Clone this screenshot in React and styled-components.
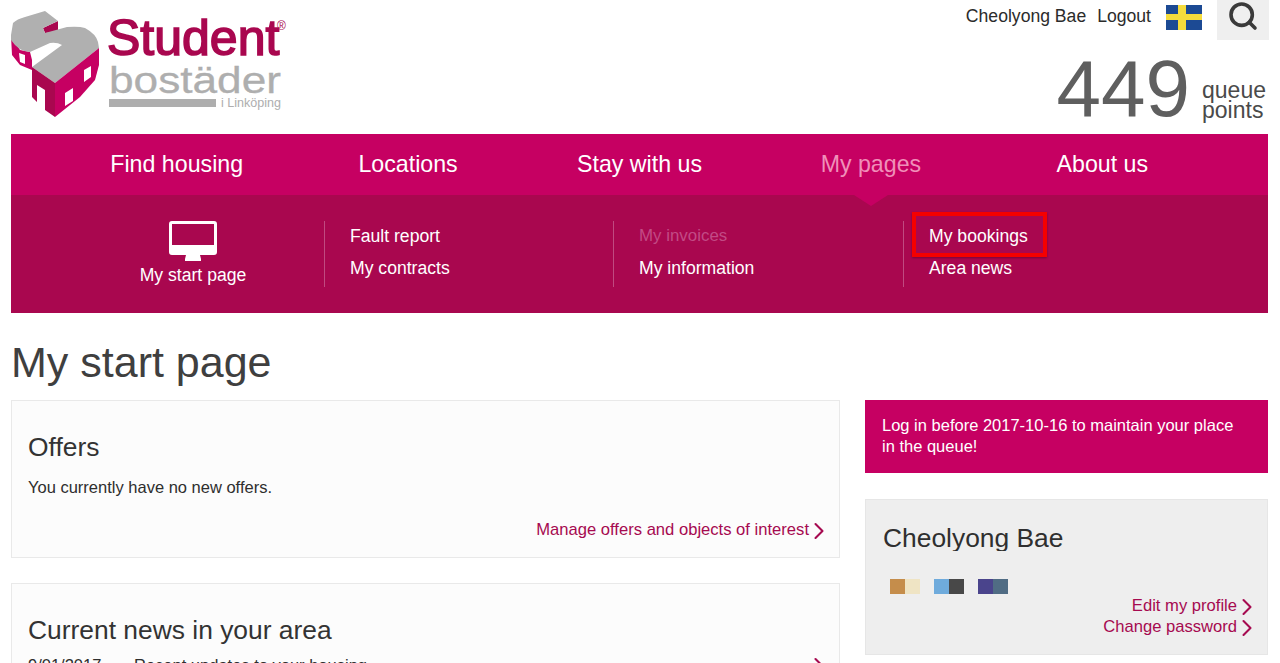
import React from "react";
import styled, { createGlobalStyle } from "styled-components";
import { ChevronRight, Search } from "lucide-react";

const Global = createGlobalStyle`
  html, body { margin: 0; padding: 0; background: #fff; height: 663px; overflow: hidden; }
  body { font-family: "Liberation Sans", Arial, sans-serif; color: #2e2e2e; }
  * { box-sizing: border-box; }
`;

const Page = styled.div`
  width: 1280px;
  height: 663px;
  overflow: hidden;
  padding: 0 12px 0 11px;
`;

const Header = styled.header`
  height: 134px;
  display: flex;
  justify-content: space-between;
`;

const Logo = styled.svg`
  width: 280px;
  height: 120px;
  display: block;
`;

const HeaderRight = styled.div`
  display: flex;
  flex-direction: column;
  align-items: flex-end;
`;

const UserBar = styled.div`
  display: flex;
  align-items: flex-start;
  height: 40px;
  margin-right: -1px;
`;

const UserLink = styled.span`
  font-size: 17.6px;
  line-height: 32px;
  color: #2b2b2b;
  margin-right: ${(p) => p.$gap}px;
`;

const Flag = styled.svg`
  width: 36px;
  height: 25px;
  margin: 5px 15px 0 0;
  display: block;
`;

const SearchBox = styled.div`
  width: 52px;
  height: 40px;
  background: #efefef;
  display: flex;
  align-items: flex-start;
  justify-content: center;
  color: #3a3a3a;
`;

const Points = styled.div`
  display: flex;
  align-items: flex-end;
  margin-top: 7px;
  margin-right: 2px;
`;

const PointsValue = styled.span`
  font-size: 80px;
  line-height: 84px;
  color: #5f5f5f;
`;

const PointsLabel = styled.span`
  font-size: 23px;
  line-height: 20px;
  color: #4a4a4a;
  margin-left: 12px;
  padding-bottom: 11px;
`;

const MainNav = styled.nav`
  height: 61px;
  background: #c60062;
  display: grid;
  grid-template-columns: repeat(5, 1fr);
  padding: 0 50px;
`;

const NavItem = styled.a`
  position: relative;
  font-size: 23.2px;
  line-height: 60px;
  text-align: center;
  color: ${(p) => (p.$active ? "#f08fb9" : "#fff")};
  ${(p) =>
    p.$active &&
    `&::after {
      content: "";
      position: absolute;
      left: 50%;
      bottom: -11px;
      margin-left: -17px;
      border-left: 17px solid transparent;
      border-right: 17px solid transparent;
      border-top: 11px solid #c60062;
    }`}
`;

const SubNav = styled.div`
  height: 118px;
  background: #a9074f;
  display: grid;
  grid-template-columns: 262px 289px 290px 1fr;
  padding: 26px 0 0 51px;
`;

const StartCol = styled.div`
  display: flex;
  flex-direction: column;
  align-items: center;
  color: #fff;
  font-size: 17.6px;
`;

const StartLabel = styled.span`
  margin-top: 4px;
  line-height: 20px;
`;

const Screen = styled.svg`
  width: 48px;
  height: 40px;
  display: block;
`;

const SubCol = styled.div`
  height: 66px;
  padding: 5px 0 0 25px;
  border-left: 1px solid #c04a80;
  display: flex;
  flex-direction: column;
  gap: 12px;
`;

const SubLink = styled.a`
  position: relative;
  font-size: ${(p) => (p.$muted ? 16.9 : 17.6)}px;
  line-height: 20px;
  height: 20px;
  white-space: nowrap;
  color: ${(p) => (p.$muted ? "#c24a85" : "#fff")};
`;

const Highlight = styled.span`
  position: absolute;
  left: -17px;
  top: -14px;
  width: 135px;
  height: 45px;
  border: 4px solid #f50000;
  box-shadow: 0 1px 2px rgba(60, 0, 30, 0.45);
`;

const PageTitle = styled.h1`
  margin: 25px 0 13px;
  font-size: 43px;
  line-height: 49px;
  font-weight: 400;
  color: #3f3f3f;
`;

const Columns = styled.div`
  display: grid;
  grid-template-columns: 829px 403px;
  column-gap: 25px;
  align-items: start;
`;

const Stack = styled.div`
  display: flex;
  flex-direction: column;
  gap: ${(p) => p.$gap}px;
`;

const Card = styled.section`
  background: #fcfcfc;
  border: 1px solid #e9e9e9;
  height: ${(p) => p.$h}px;
  padding: 30px 16px 0;
`;

const CardTitle = styled.h2`
  margin: 0;
  font-size: 26.4px;
  line-height: 32px;
  font-weight: 400;
  color: #333;
`;

const CardText = styled.p`
  margin: 12px 0 0;
  font-size: 16.5px;
  line-height: 24px;
  color: #2e2e2e;
`;

const LinkRow = styled.div`
  display: flex;
  justify-content: flex-end;
  margin-top: 20px;
`;

const MoreLink = styled.a`
  display: inline-flex;
  align-items: center;
  font-size: 16.6px;
  line-height: 21px;
  height: 21px;
  color: #a60a50;
`;

const Chevron = styled(ChevronRight)`
  width: 28px;
  height: 28px;
  margin: 2px -10px 0 -4px;
  flex: none;
`;

const NewsRow = styled.div`
  display: flex;
  justify-content: space-between;
  align-items: center;
  height: 22px;
  margin-top: 8px;
  font-size: 16.5px;
  line-height: 22px;
  color: #2e2e2e;
`;

const NewsDate = styled.span`
  width: 106px;
  display: inline-block;
`;

const Banner = styled.div`
  height: 73px;
  background: #c60062;
  color: #fff;
  font-size: 16.5px;
  line-height: 20.5px;
  padding: 15px 17px 0;
`;

const ProfileCard = styled.section`
  height: 156px;
  background: #eeeeee;
  border: 1px solid #e6e6e6;
  padding: 23px 17px 0;
`;

const ProfileName = styled.h2`
  margin: 0;
  height: 28px;
  overflow: hidden;
  font-size: 26.4px;
  line-height: 30px;
  font-weight: 400;
  color: #2f2f2f;
`;

const Swatches = styled.div`
  display: flex;
  gap: 14px;
  margin: 28px 0 0 7px;
  height: 15px;
`;

const Swatch = styled.div`
  display: flex;
  width: 30px;
  height: 15px;
`;

const Tone = styled.span`
  flex: 1;
  background: ${(p) => p.$c};
`;

const ProfileLinks = styled.div`
  margin-top: 1px;
  display: flex;
  flex-direction: column;
  align-items: flex-end;
  margin-right: -1px;
`;

const Monitor = () => (
  <Screen viewBox="0 0 48 40">
    <path
      fill="#fff"
      fillRule="evenodd"
      d="M3 0h42a3 3 0 0 1 3 3v28a3 3 0 0 1-3 3H31l1 4v2H16v-2l1-4H3a3 3 0 0 1-3-3V3a3 3 0 0 1 3-3zM3 3v21h42V3z"
    />
  </Screen>
);

const LogoMark = () => (
  <Logo viewBox="0 0 280 120">
    <path fill="#c60062" d="M0 36 L1 55 L9 65 L21 70 L21 60 L19 52 L9 50z" />
    <path fill="#fff" d="M8 53 L14 55 V64 L9 62z" />
    <path fill="#a9074f" d="M32 28 L47 21 L47 32 L34 33z" />
    <path
      fill="#b0b0b0"
      d="M0 35 L2 23 Q6 19 14 17 L34 11 L47 21 L32 28 L34 33 L56 27 Q68 26 74 28 Q85 34 87 42 L88 48 L44 83 L21 67 L51 45 Q46 42 39 43 L19 52 Q8 52 0 40z"
    />
    <path fill="#a9074f" d="M21 67 L44 83 V117 L34 110 V90 L26 85 V102 L21 97z" />
    <path fill="#c60062" d="M44 83 L88 48 V65 L84 80 L69 97 L44 117z" />
    <path fill="#fff" d="M73 70 L80 66 V77 L73 82z M54 93 L62 88 V101 L54 106z" />
    <text x="96" y="55" fontFamily="'Liberation Sans', sans-serif" fontSize="50" fill="#a9074f" stroke="#a9074f" strokeWidth="1.6">Student</text>
    <text x="266" y="30" fontFamily="'Liberation Sans', sans-serif" fontSize="12" fill="#a9074f">®</text>
    <text x="98" y="93" fontFamily="'Liberation Sans', sans-serif" fontSize="36" fill="#aeaeae" stroke="#aeaeae" strokeWidth="0.3" textLength="172" lengthAdjust="spacingAndGlyphs">bostäder</text>
    <rect x="98" y="99" width="107" height="8" fill="#aeaeae" />
    <text x="210" y="107" fontFamily="'Liberation Sans', sans-serif" fontSize="12" fill="#aeaeae" textLength="60" lengthAdjust="spacingAndGlyphs">i Linköping</text>
  </Logo>
);

const SwedishFlag = () => (
  <Flag viewBox="0 0 36 25">
    <rect width="36" height="25" fill="#1c4a94" />
    <rect x="12" width="8" height="25" fill="#f5dc3c" />
    <rect y="9" width="36" height="6" fill="#f5dc3c" />
  </Flag>
);

const navItems = ["Find housing", "Locations", "Stay with us", "My pages", "About us"];
const swatches = [
  ["#c58d4b", "#efe4c4"],
  ["#6fabdc", "#484848"],
  ["#4a448c", "#506c84"],
];

export default function App() {
  return (
    <Page>
      <Global />
      <Header>
        <LogoMark />
        <HeaderRight>
          <UserBar>
            <UserLink $gap={11}>Cheolyong Bae</UserLink>
            <UserLink $gap={15}>Logout</UserLink>
            <SwedishFlag />
            <SearchBox>
              <Search size={32} strokeWidth={2.7} />
            </SearchBox>
          </UserBar>
          <Points>
            <PointsValue>449</PointsValue>
            <PointsLabel>
              queue
              <br />
              points
            </PointsLabel>
          </Points>
        </HeaderRight>
      </Header>
      <MainNav>
        {navItems.map((n) => (
          <NavItem key={n} $active={n === "My pages"}>
            {n}
          </NavItem>
        ))}
      </MainNav>
      <SubNav>
        <StartCol>
          <Monitor />
          <StartLabel>My start page</StartLabel>
        </StartCol>
        <SubCol>
          <SubLink>Fault report</SubLink>
          <SubLink>My contracts</SubLink>
        </SubCol>
        <SubCol>
          <SubLink $muted>My invoices</SubLink>
          <SubLink>My information</SubLink>
        </SubCol>
        <SubCol>
          <SubLink>
            My bookings
            <Highlight />
          </SubLink>
          <SubLink>Area news</SubLink>
        </SubCol>
      </SubNav>
      <PageTitle>My start page</PageTitle>
      <Columns>
        <Stack $gap={25}>
          <Card $h={158}>
            <CardTitle>Offers</CardTitle>
            <CardText>You currently have no new offers.</CardText>
            <LinkRow>
              <MoreLink>
                Manage offers and objects of interest
                <Chevron strokeWidth={1.8} />
              </MoreLink>
            </LinkRow>
          </Card>
          <Card $h={120}>
            <CardTitle>Current news in your area</CardTitle>
            <NewsRow>
              <span>
                <NewsDate>9/01/2017</NewsDate>Recent updates to your housing
              </span>
              <Chevron color="#a60a50" strokeWidth={1.8} />
            </NewsRow>
          </Card>
        </Stack>
        <Stack $gap={26}>
          <Banner>
            Log in before 2017-10-16 to maintain your place
            <br />
            in the queue!
          </Banner>
          <ProfileCard>
            <ProfileName>Cheolyong Bae</ProfileName>
            <Swatches>
              {swatches.map((s) => (
                <Swatch key={s[0]}>
                  <Tone $c={s[0]} />
                  <Tone $c={s[1]} />
                </Swatch>
              ))}
            </Swatches>
            <ProfileLinks>
              <MoreLink>
                Edit my profile
                <Chevron strokeWidth={1.8} />
              </MoreLink>
              <MoreLink>
                Change password
                <Chevron strokeWidth={1.8} />
              </MoreLink>
            </ProfileLinks>
          </ProfileCard>
        </Stack>
      </Columns>
    </Page>
  );
}
